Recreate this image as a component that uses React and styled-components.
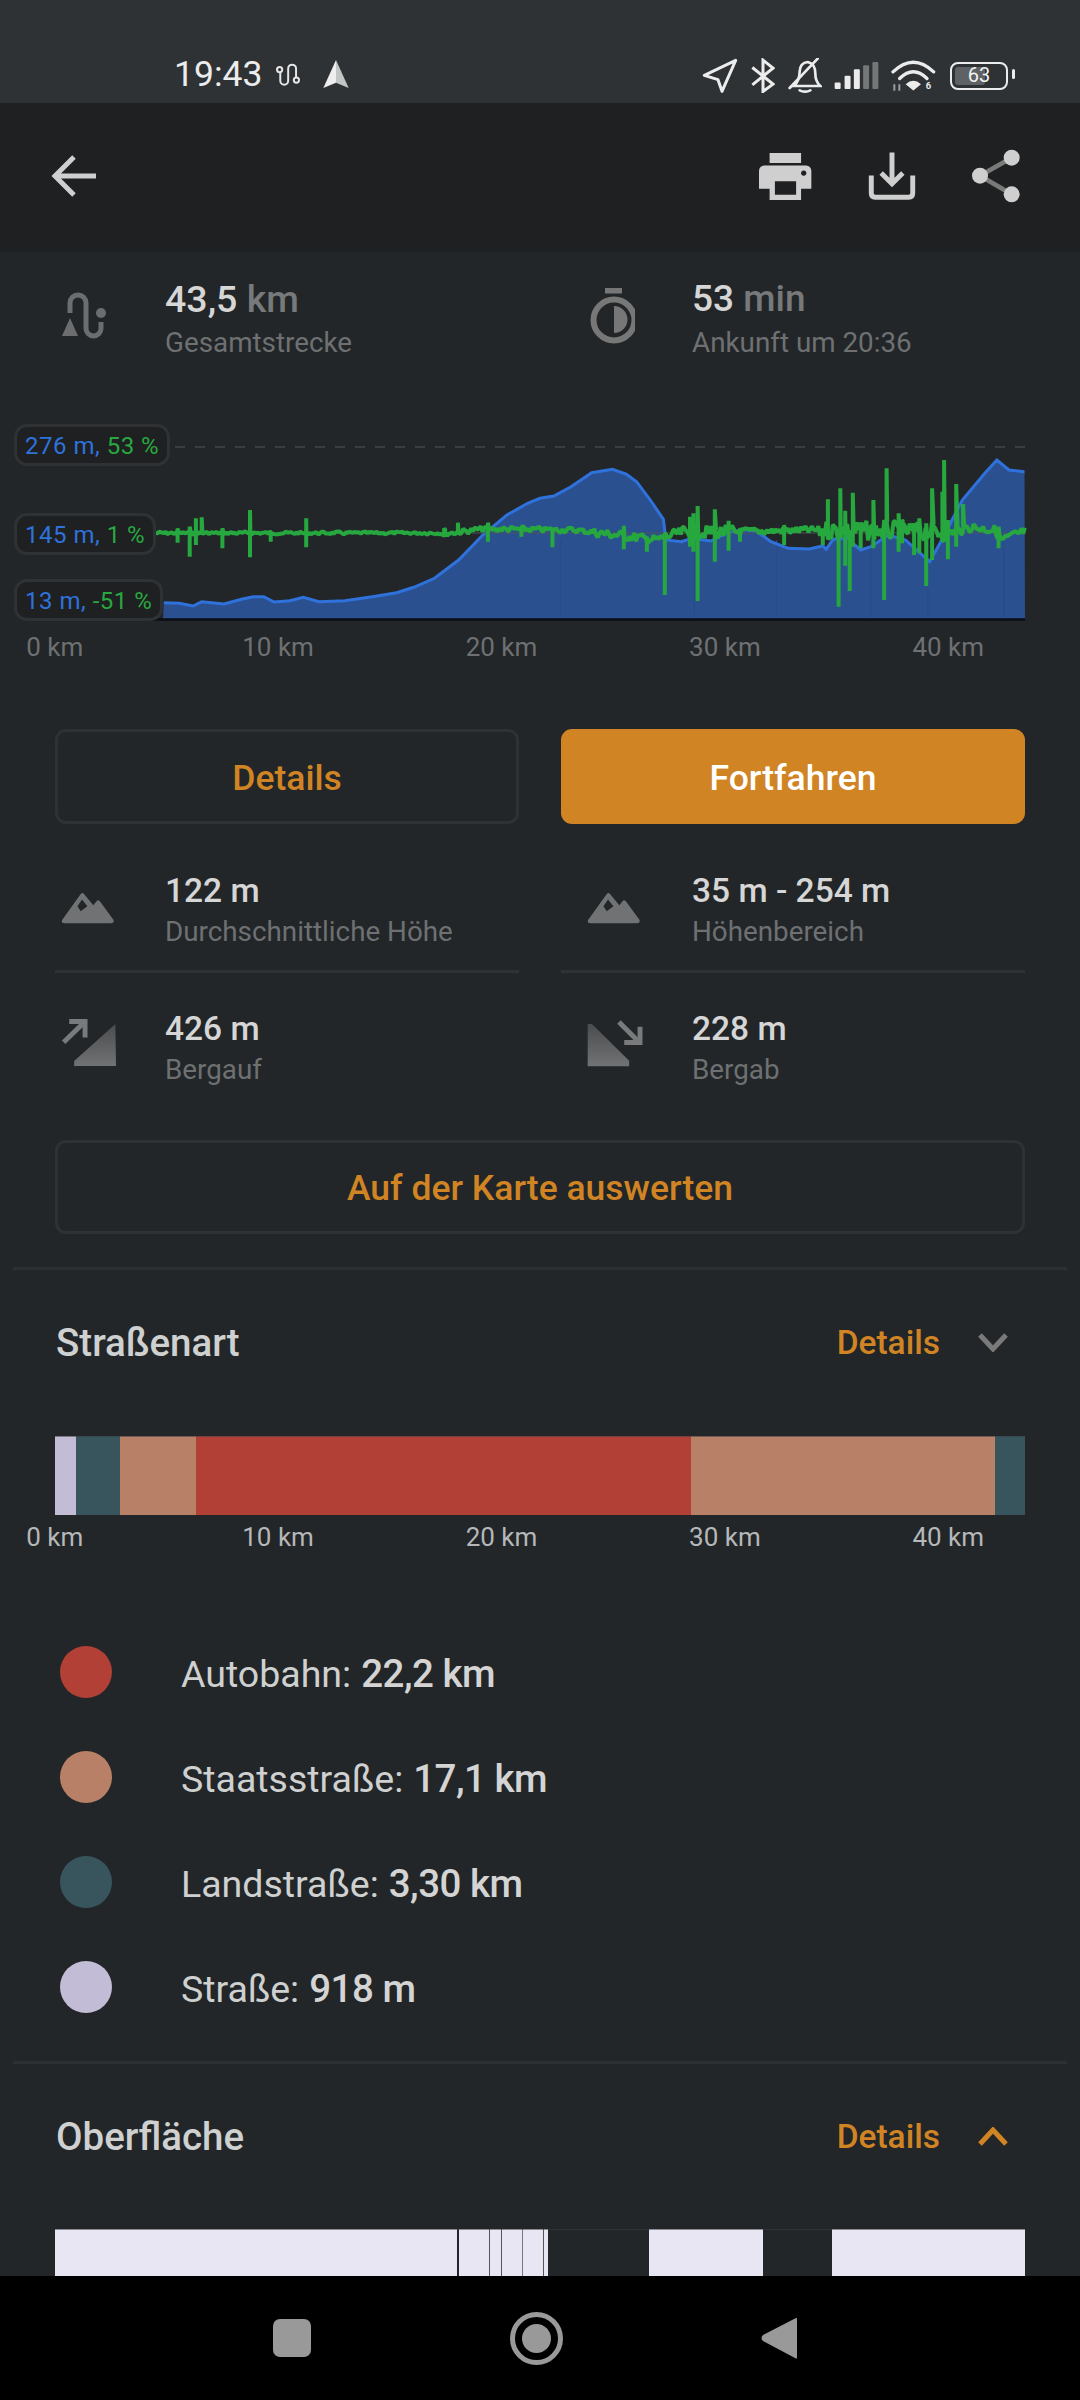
import React from "react";
import styled, { createGlobalStyle } from "styled-components";

const ORANGE = "#d08423";
const BG = "#222628";
const LINE = "#2e3235";

const GlobalStyle = createGlobalStyle`
  html, body {
    margin: 0;
    padding: 0;
    background: ${BG};
  }
  * {
    box-sizing: border-box;
  }
`;

// chart data was read off the reference: L = left half, R = right half
const lx = (x) => x / 2.9;
const rx = (x) => 540 + x / 2.9;
const zy = (y) => 260 + y / 3;

const elevation = [
  ...[
    [475, 1028], [520, 1030], [560, 1038], [585, 1025], [650, 1032], [700, 1018], [735, 1010], [765, 1010],
    [795, 1026], [840, 1022], [880, 1012], [925, 1025], [1000, 1022], [1080, 1010], [1150, 998], [1200, 982],
    [1260, 955], [1330, 900], [1400, 825], [1470, 765], [1530, 730],
  ].map(([x, y]) => [lx(x), zy(y)]),
  ...[
    [0, 715], [40, 708], [90, 680], [150, 638], [210, 628], [250, 642], [280, 665], [320, 720], [358, 778],
    [365, 840], [410, 845], [440, 835], [495, 843], [540, 820], [590, 808], [630, 815], [670, 845], [720, 865],
    [780, 867], [820, 858], [830, 868], [850, 838], [890, 835], [930, 870], [960, 860], [1010, 825], [1060, 840],
    [1130, 905], [1160, 850], [1225, 720], [1290, 640], [1325, 600], [1360, 630], [1405, 635],
  ].map(([x, y]) => [rx(x), zy(y)]),
];

const elevationLine = elevation.map(([x, y]) => `${x.toFixed(1)},${y.toFixed(1)}`).join(" ");
const elevationArea = `163,619 ${elevationLine} 1025,619`;

const spikes = [
  ...[
    [515, 805, 848], [550, 800, 890], [568, 775, 855], [585, 772, 825], [645, 805, 865], [725, 750, 892],
    [785, 820, 845], [888, 775, 862], [1288, 805, 832], [1328, 788, 825], [1415, 788, 845], [1512, 805, 830],
  ].map(([x, a, b]) => [lx(x), zy(a), zy(b)]),
  ...[
    [36, 820, 862], [243, 797, 868], [310, 830, 875], [362, 820, 1005], [435, 770, 860], [445, 760, 875],
    [457, 738, 1023], [507, 748, 905], [547, 782, 872], [580, 805, 845], [708, 795, 855], [820, 820, 855],
    [835, 718, 825], [866, 810, 1040], [871, 685, 825], [885, 752, 917], [898, 830, 993], [907, 698, 860],
    [930, 820, 865], [967, 720, 865], [998, 780, 1020], [1005, 625, 820], [1040, 760, 875], [1050, 780, 850],
    [1085, 820, 885], [1100, 775, 880], [1120, 790, 978], [1137, 685, 900], [1167, 695, 830], [1172, 600, 800],
    [1183, 780, 898], [1207, 672, 860], [1227, 732, 800], [1330, 800, 865],
  ].map(([x, a, b]) => [rx(x), zy(a), zy(b)]),
].sort((a, b) => a[0] - b[0]);

const baseStops = [
  [156, 533], [450, 533], [483, 529], [574, 530], [657, 540], [678, 533], [816, 530], [954, 532], [971, 527],
  [995, 530], [1002, 540], [1025, 531],
];

const baseAt = (x) => {
  for (let i = 1; i < baseStops.length; i++) {
    const [x0, y0] = baseStops[i - 1];
    const [x1, y1] = baseStops[i];
    if (x <= x1) return y0 + ((y1 - y0) * (x - x0)) / (x1 - x0);
  }
  return 531;
};

const ampAt = (x) => {
  if (x < 440) return 1.5;
  if (x < 590) return 3;
  if (x < 680) return 5;
  if (x < 735) return 7;
  if (x < 820) return 4;
  if (x < 945) return 10;
  return 5;
};

const buildGreen = () => {
  const pts = [];
  let seed = 7;
  let next = 0;
  for (let x = 156; x <= 1025; x += 1.6) {
    seed = (seed * 9301 + 49297) % 233280;
    const y = baseAt(x) + (seed / 233280 - 0.5) * 2 * ampAt(x);
    pts.push(`${x.toFixed(1)},${y.toFixed(1)}`);
    while (next < spikes.length && spikes[next][0] <= x) {
      const [sx, a, b] = spikes[next];
      pts.push(`${sx.toFixed(1)},${a.toFixed(1)}`, `${sx.toFixed(1)},${b.toFixed(1)}`, `${sx.toFixed(1)},${y.toFixed(1)}`);
      next++;
    }
  }
  return pts.join(" ");
};

const greenLine = buildGreen();
const gridLines = [60, 448, 686, 960, 1125, 1345].map(rx);

const kmLabels = ["0 km", "10 km", "20 km", "30 km", "40 km"];

const roadSegments = [
  { w: 20.7, c: "#c3bcd6" },
  { w: 44.3, c: "#38555d" },
  { w: 76, c: "#b78067" },
  { w: 495, c: "#b34036" },
  { w: 304, c: "#b78067" },
  { w: 30, c: "#38555d" },
];

const surfaceSegments = [
  { w: 402, c: "#e9e6f4" },
  { w: 2, c: "#222628" },
  { w: 30, c: "#e9e6f4" },
  { w: 1, c: "#555" },
  { w: 11, c: "#e9e6f4" },
  { w: 1, c: "#555" },
  { w: 20, c: "#e9e6f4" },
  { w: 1, c: "#777" },
  { w: 20, c: "#e9e6f4" },
  { w: 1, c: "#555" },
  { w: 3.5, c: "#e9e6f4" },
  { w: 101.5, c: BG, gap: true },
  { w: 114, c: "#e9e6f4" },
  { w: 69, c: BG, gap: true },
  { w: 193, c: "#e9e6f4" },
];

const legend = [
  { c: "#b34036", name: "Autobahn:", value: "22,2 km" },
  { c: "#b78067", name: "Staatsstraße:", value: "17,1 km" },
  { c: "#38555d", name: "Landstraße:", value: "3,30 km" },
  { c: "#c3bcd6", name: "Straße:", value: "918 m" },
];

const Screen = styled.div`
  width: 1080px;
  height: 2400px;
  display: flex;
  flex-direction: column;
  overflow: hidden;
  background: ${BG};
  font-family: Roboto, "Liberation Sans", sans-serif;
`;

const StatusBar = styled.div`
  height: 103px;
  flex: none;
  background: #2e3235;
  display: flex;
  align-items: flex-end;
  justify-content: space-between;
  padding: 0 64px 10px 174px;
  color: #ececec;
`;

const StatusGroup = styled.div`
  display: flex;
  align-items: center;
  gap: 12px;
`;

const Clock = styled.span`
  font-size: 35.5px;
  line-height: 38px;
  margin-right: 1px;
`;

const HeadingSlot = styled.span`
  display: flex;
  margin-left: 9px;
`;

const Battery = styled.div`
  position: relative;
  width: 58px;
  height: 28px;
  margin-left: 2px;
  margin-right: 8px;
  border: 2.5px solid #ececec;
  border-radius: 8px;
  font-size: 20px;
  line-height: 23px;
  text-align: center;
  color: #f2f2f2;

  &::before {
    content: "";
    position: absolute;
    left: 3px;
    top: 3px;
    bottom: 3px;
    width: 30px;
    border-radius: 3px;
    background: #5f6265;
  }

  &::after {
    content: "";
    position: absolute;
    right: -9px;
    top: 5px;
    width: 3px;
    height: 10px;
    border-radius: 2px;
    background: #ececec;
  }

  span {
    position: relative;
  }
`;

const Toolbar = styled.div`
  height: 149px;
  flex: none;
  background: #1e2022;
  display: flex;
  align-items: center;
  justify-content: space-between;
  padding: 0 60px 3px 51px;
`;

const ToolGroup = styled.div`
  display: flex;
  align-items: center;
  gap: 56px;
`;

const Content = styled.div`
  flex: 1;
  min-height: 0;
  overflow: hidden;
  padding-top: 25px;
`;

const Grid = styled.div`
  display: grid;
  grid-template-columns: 464px 464px;
  column-gap: 42px;
  padding: 0 55px;
`;

const Stat = styled.div`
  display: flex;
  align-items: center;
  padding: ${(p) => p.$top || 0}px 0 ${(p) => p.$bottom || 0}px;
  border-bottom: ${(p) => (p.$rule ? `3px solid ${LINE}` : "none")};
`;

const IconSlot = styled.div`
  flex: none;
  width: ${(p) => (p.$right ? 131 : 110)}px;
  padding-left: ${(p) => (p.$right ? 26 : 6)}px;
  padding-bottom: ${(p) => p.$lift || 0}px;
  display: flex;
  align-items: center;
`;

const Value = styled.div`
  font-size: ${(p) => p.$size || 33.5}px;
  line-height: ${(p) => p.$line || 41}px;
  font-weight: 500;
  color: #d6d6d6;
`;

const Unit = styled.span`
  color: #77797a;
`;

const Caption = styled.div`
  font-size: 27.8px;
  line-height: ${(p) => p.$line || 41}px;
  color: #6e7072;
`;

const ChartBlock = styled.div`
  position: relative;
  height: 197px;
  margin-top: 59px;
`;

const ChartSvg = styled.svg`
  display: block;
  width: 1080px;
  height: 197px;
`;

const Bubble = styled.div`
  position: absolute;
  left: 14px;
  top: ${(p) => p.$top}px;
  height: 42px;
  padding: 0 8px;
  border: 3px solid ${LINE};
  border-radius: 13px;
  background: #1e2022;
  font-size: 24px;
  line-height: 39px;
  letter-spacing: 0.5px;
  white-space: nowrap;
  color: #29a840;

  b {
    font-weight: 400;
    color: #2f72dc;
  }
`;

const Axis = styled.div`
  display: flex;
  margin: ${(p) => p.$top}px 0 0 -57px;
`;

const Tick = styled.div`
  width: 223.4px;
  flex: none;
  text-align: center;
  font-size: 26px;
  line-height: 34px;
  color: ${(p) => p.$color};
`;

const ButtonRow = styled.div`
  display: grid;
  grid-template-columns: 464px 464px;
  column-gap: 42px;
  padding: 0 55px;
  margin-top: 65px;
`;

const Button = styled.div`
  height: ${(p) => p.$h || 95}px;
  display: flex;
  align-items: center;
  justify-content: center;
  padding-top: 2px;
  border-radius: 11px;
  border: 3px solid ${(p) => (p.$solid ? ORANGE : LINE)};
  background: ${(p) => (p.$solid ? ORANGE : "transparent")};
  color: ${(p) => (p.$solid ? "#fff" : ORANGE)};
  font-size: 35.5px;
  font-weight: 500;
`;

const WideButton = styled(Button)`
  margin: 50px 55px 0;
`;

const SectionRule = styled.div`
  height: 3px;
  margin: ${(p) => p.$top}px 13px 0;
  background: #2c3032;
`;

const SectionHead = styled.div`
  display: flex;
  align-items: center;
  justify-content: space-between;
  height: 50px;
  margin-top: ${(p) => p.$top}px;
  padding: 0 72px 0 56px;
`;

const SectionTitle = styled.div`
  font-size: 38.5px;
  font-weight: 500;
  color: #cfd0d0;
`;

const SectionLink = styled.div`
  display: flex;
  align-items: center;
  gap: 38px;
  font-size: 33.5px;
  font-weight: 500;
  color: ${ORANGE};
`;

const Bar = styled.div`
  display: flex;
  height: ${(p) => p.$h}px;
  margin: ${(p) => p.$top}px 55px 0;
`;

const Segment = styled.div`
  flex: none;
  width: ${(p) => p.$w}px;
  background: ${(p) => p.$c};
  border-top: 1px solid ${(p) => (p.$gap ? LINE : "rgba(60, 64, 68, 0.55)")};
`;

const Legend = styled.div`
  margin-top: 65px;
`;

const LegendRow = styled.div`
  display: flex;
  align-items: center;
  height: 105px;
  padding-left: 60px;
  font-size: 37.5px;
  color: #cfd0d0;
`;

const Dot = styled.div`
  flex: none;
  width: 52px;
  height: 52px;
  margin-right: 69px;
  border-radius: 50%;
  background: ${(p) => p.$c};
`;

const LegendLabel = styled.div`
  padding-top: 3px;
`;

const LegendValue = styled.span`
  font-size: 38.5px;
  font-weight: 500;
  letter-spacing: -0.5px;
  color: #d4d4d4;
  margin-left: 10px;
`;

const NavBar = styled.div`
  height: 124px;
  flex: none;
  background: #000;
  display: flex;
  align-items: center;
  padding-left: 273px;
`;

const NavSquare = styled.div`
  width: 38px;
  height: 38px;
  border-radius: 7px;
  background: #999;
`;

const NavCircle = styled.div`
  width: 53px;
  height: 53px;
  margin: 0 198px 0 199px;
  border-radius: 50%;
  border: 5px solid #999;
  display: flex;
  align-items: center;
  justify-content: center;

  &::after {
    content: "";
    width: 29px;
    height: 29px;
    border-radius: 50%;
    background: #999;
  }
`;

const GradientDefs = () => (
  <defs>
    <linearGradient id="slope" x1="0" y1="0" x2="0" y2="1">
      <stop offset="0" stopColor="#4a4c4d" />
      <stop offset="1" stopColor="#717273" />
    </linearGradient>
  </defs>
);

const BackIcon = () => (
  <svg width="45" height="42" viewBox="0 0 45 42" fill="none" stroke="#cfcfcf" strokeWidth="5">
    <path d="M45 21H5M23 2L4 21l19 19" />
  </svg>
);

const PrintIcon = () => (
  <svg width="53" height="49" viewBox="60 68 160 146">
    <path
      fill="#cfcfcf"
      fillRule="evenodd"
      d="M92 70h95v30H92zM76 108h126a16 16 0 0 1 16 16v54h-31v34H92v-34H60v-54a16 16 0 0 1 16-16zM108 155v41h64v-41zM195 123a8 8 0 1 0 0.01 0z"
    />
  </svg>
);

const DownloadIcon = () => (
  <svg width="48" height="49" viewBox="382 68 146 146" fill="none" stroke="#cfcfcf" strokeWidth="15">
    <path d="M455 68v97M422 130l33 33 33-33" />
    <path d="M392 138v54q0 12 12 12h102q12 0 12-12v-54" />
  </svg>
);

const ShareIcon = () => (
  <svg width="48" height="54" viewBox="698 58 144 162">
    <path d="M722 138L817 84M722 138L817 194" stroke="#7a7a7a" strokeWidth="14" />
    <circle cx="722" cy="138" r="24" fill="#cfcfcf" />
    <circle cx="817" cy="84" r="24" fill="#cfcfcf" />
    <circle cx="817" cy="194" r="24" fill="#cfcfcf" />
  </svg>
);

const RouteStatusIcon = () => (
  <svg width="27" height="23" viewBox="342 68 80 70" fill="none" stroke="#e6e6e6" strokeWidth="6">
    <path d="M357 97v25a12 12 0 0 0 24 0V85a12 12 0 0 1 24 0v26" />
    <circle cx="355" cy="88" r="8" />
    <circle cx="406" cy="120" r="8" />
  </svg>
);

const HeadingIcon = () => (
  <svg width="26" height="28" viewBox="487 62 76 84">
    <path d="M525 62L487 146l38-16z" fill="#eeeeee" />
    <path d="M525 62l38 84-38-16z" fill="#c4c6c6" />
  </svg>
);

const LocationIcon = () => (
  <svg width="36" height="35" viewBox="45 40 108 105" fill="none" stroke="#ececec" strokeWidth="9" strokeLinejoin="round">
    <path d="M146 47L52 92l41 13 12 35z" />
  </svg>
);

const BluetoothIcon = () => (
  <svg width="25" height="35" viewBox="185 42 75 104" fill="none" stroke="#ececec" strokeWidth="9">
    <path d="M192 70l62 50-30 22V48l30 24-62 50" />
  </svg>
);

const BellOffIcon = () => (
  <svg width="35" height="35" viewBox="300 38 105 105" fill="none" stroke="#ececec" strokeWidth="8" strokeLinecap="round">
    <path d="M322 122q16-18 16-44q2-26 24-28q23 5 23 35q0 23 15 37z" />
    <path d="M308 128L392 40" />
    <path d="M338 135q16 8 32 0" />
  </svg>
);

const SignalIcon = () => (
  <svg width="45" height="29" viewBox="440 46 136 86">
    <rect x="442" y="110" width="18" height="20" rx="3" fill="#ececec" />
    <rect x="472" y="90" width="18" height="40" rx="3" fill="#ececec" />
    <rect x="500" y="70" width="18" height="60" rx="3" fill="#ececec" />
    <rect x="528" y="58" width="18" height="72" rx="3" fill="#747678" />
    <rect x="556" y="48" width="18" height="82" rx="3" fill="#747678" />
  </svg>
);

const WifiIcon = () => (
  <svg width="45" height="32" viewBox="608 45 135 95">
    <g fill="none" stroke="#ececec" strokeWidth="10" strokeLinecap="round">
      <path d="M614 80q61-58 122 0" />
      <path d="M634 100q41-40 82 0" />
    </g>
    <path d="M652 117q23-20 46 0l-23 19z" fill="#ececec" />
    <path d="M618 137v-20M633 137v-20" stroke="#9a9c9e" strokeWidth="6" />
    <text x="712" y="131" fontSize="28" fontWeight="700" fill="#ececec" fontFamily="Roboto, sans-serif">
      6
    </text>
  </svg>
);

const RouteIcon = () => (
  <svg width="48" height="50" viewBox="0 0 48 50">
    <path d="M9 22V12a8 8 0 0 1 16 0v25.5a7.5 7.5 0 0 0 15 0V31" fill="none" stroke="#6b6d6e" strokeWidth="5" />
    <circle cx="40" cy="22" r="5" fill="#6b6d6e" />
    <path d="M9 27L1 45h16z" fill="#6b6d6e" />
  </svg>
);

const TimerIcon = () => (
  <svg width="48" height="56" viewBox="-3 0 48 56">
    <rect x="15" y="0" width="17" height="5.5" fill="#777" />
    <circle cx="24" cy="32" r="20.5" fill="none" stroke="#777" strokeWidth="6" />
    <path d="M24 18a13.5 13.5 0 0 1 0 27z" fill="#777" />
  </svg>
);

const MountainIcon = () => (
  <svg width="54" height="32" viewBox="0 0 160 97">
    <path
      fill="#707274"
      fillRule="evenodd"
      d="M2 84L58 6q5-6 10 0L96 40l10-12q4-6 10 0L157 84q4 10-7 11H8Q-3 94 2 84zM62 23L48 43l10 15 20-15z"
    />
  </svg>
);

const UphillIcon = () => (
  <svg width="56" height="50" viewBox="60 475 170 150">
    <GradientDefs />
    <path d="M225 492L100 605v15h127z" fill="url(#slope)" />
    <path d="M68 548l62-60" stroke="#787a7b" strokeWidth="15" fill="none" />
    <path d="M85 485h48v48" stroke="#787a7b" strokeWidth="15" fill="none" />
  </svg>
);

const DownhillIcon = () => (
  <svg width="56" height="47" viewBox="50 60 170 142">
    <GradientDefs />
    <path d="M52 72h13l113 111v17H52z" fill="url(#slope)" />
    <path d="M147 66l60 60" stroke="#787a7b" strokeWidth="15" fill="none" />
    <path d="M211 80v48h-48" stroke="#787a7b" strokeWidth="15" fill="none" />
  </svg>
);

const Chevron = ({ up, color }) => (
  <svg width="30" height="19" viewBox="0 0 30 19" fill="none" stroke={color} strokeWidth="5">
    <path d={up ? "M2 17L15 3l13 14" : "M2 2l13 14L28 2"} />
  </svg>
);

const NavBack = () => (
  <svg width="36" height="43" viewBox="0 0 36 43">
    <path d="M35 1Q36 0 36 3v37q0 3-2 1L2 24q-3-3 0-6z" fill="#999" />
  </svg>
);

const Chart = () => (
  <ChartBlock>
    <ChartSvg viewBox="0 424 1080 197">
      <line x1="175" y1="447" x2="1025" y2="447" stroke="#3a3e41" strokeWidth="2" strokeDasharray="10 10" />
      <polygon points={elevationArea} fill="#2a5090" />
      {gridLines.map((x) => (
        <line key={x} x1={x} y1={540} x2={x} y2={618} stroke="#284c8a" strokeWidth="1" />
      ))}
      <polyline points={elevationLine} fill="none" stroke="#2f72dc" strokeWidth="3" />
      <line x1="175" y1="533" x2="1025" y2="533" stroke="#4b5358" strokeOpacity="0.5" strokeWidth="2" />
      <polyline points={greenLine} fill="none" stroke="#27a83f" strokeWidth="4" strokeLinejoin="bevel" />
      <line x1="55" y1="619.5" x2="1025" y2="619.5" stroke="#0b0d14" strokeWidth="2.5" />
    </ChartSvg>
    <Bubble $top={0}>
      <b>276 m,</b> 53 %
    </Bubble>
    <Bubble $top={89}>
      <b>145 m,</b> 1 %
    </Bubble>
    <Bubble $top={155}>
      <b>13 m,</b> -51 %
    </Bubble>
  </ChartBlock>
);

const KmAxis = ({ color, top }) => (
  <Axis $top={top}>
    {kmLabels.map((k) => (
      <Tick key={k} $color={color}>
        {k}
      </Tick>
    ))}
  </Axis>
);

const App = () => {
  return (
    <Screen>
      <GlobalStyle />
      <StatusBar>
        <StatusGroup>
          <Clock>19:43</Clock>
          <RouteStatusIcon />
          <HeadingSlot>
            <HeadingIcon />
          </HeadingSlot>
        </StatusGroup>
        <StatusGroup>
          <LocationIcon />
          <BluetoothIcon />
          <BellOffIcon />
          <SignalIcon />
          <WifiIcon />
          <Battery>
            <span>63</span>
          </Battery>
        </StatusGroup>
      </StatusBar>

      <Toolbar>
        <BackIcon />
        <ToolGroup>
          <PrintIcon />
          <DownloadIcon />
          <ShareIcon />
        </ToolGroup>
      </Toolbar>

      <Content>
        <Grid>
          <Stat>
            <IconSlot $lift={11}>
              <RouteIcon />
            </IconSlot>
            <div>
              <Value $size={37.5} $line={44}>
                43,5 <Unit>km</Unit>
              </Value>
              <Caption $line={44}>Gesamtstrecke</Caption>
            </div>
          </Stat>
          <Stat>
            <IconSlot $right $lift={11}>
              <TimerIcon />
            </IconSlot>
            <div>
              <Value $size={37} $line={44}>
                53 <Unit>min</Unit>
              </Value>
              <Caption $line={44}>Ankunft um 20:36</Caption>
            </div>
          </Stat>
        </Grid>

        <Chart />
        <KmAxis color="#6e7072" top={9} />

        <ButtonRow>
          <Button>Details</Button>
          <Button $solid>Fortfahren</Button>
        </ButtonRow>

        <Grid>
          <Stat $top={46} $bottom={18} $rule>
            <IconSlot $lift={7}>
              <MountainIcon />
            </IconSlot>
            <div>
              <Value>122 m</Value>
              <Caption>Durchschnittliche Höhe</Caption>
            </div>
          </Stat>
          <Stat $top={46} $bottom={18} $rule>
            <IconSlot $right $lift={7}>
              <MountainIcon />
            </IconSlot>
            <div>
              <Value>35 m - 254 m</Value>
              <Caption>Höhenbereich</Caption>
            </div>
          </Stat>
          <Stat $top={35}>
            <IconSlot $lift={13}>
              <UphillIcon />
            </IconSlot>
            <div>
              <Value>426 m</Value>
              <Caption>Bergauf</Caption>
            </div>
          </Stat>
          <Stat $top={35}>
            <IconSlot $right $lift={11}>
              <DownhillIcon />
            </IconSlot>
            <div>
              <Value>228 m</Value>
              <Caption>Bergab</Caption>
            </div>
          </Stat>
        </Grid>

        <WideButton $h={94}>Auf der Karte auswerten</WideButton>

        <SectionRule $top={33} />
        <SectionHead $top={47}>
          <SectionTitle>Straßenart</SectionTitle>
          <SectionLink>
            Details
            <Chevron color="#7a7a7a" />
          </SectionLink>
        </SectionHead>
        <Bar $h={79} $top={69}>
          {roadSegments.map((s, i) => (
            <Segment key={i} $w={s.w} $c={s.c} />
          ))}
        </Bar>
        <KmAxis color="#b5b7b8" top={5} />

        <Legend>
          {legend.map((row) => (
            <LegendRow key={row.name}>
              <Dot $c={row.c} />
              <LegendLabel>
                {row.name}
                <LegendValue>{row.value}</LegendValue>
              </LegendLabel>
            </LegendRow>
          ))}
        </Legend>

        <SectionRule $top={22} />
        <SectionHead $top={47}>
          <SectionTitle>Oberfläche</SectionTitle>
          <SectionLink>
            Details
            <Chevron up color={ORANGE} />
          </SectionLink>
        </SectionHead>
        <Bar $h={60} $top={68}>
          {surfaceSegments.map((s, i) => (
            <Segment key={i} $w={s.w} $c={s.c} $gap={s.gap} />
          ))}
        </Bar>
      </Content>

      <NavBar>
        <NavSquare />
        <NavCircle />
        <NavBack />
      </NavBar>
    </Screen>
  );
};

export default App;
